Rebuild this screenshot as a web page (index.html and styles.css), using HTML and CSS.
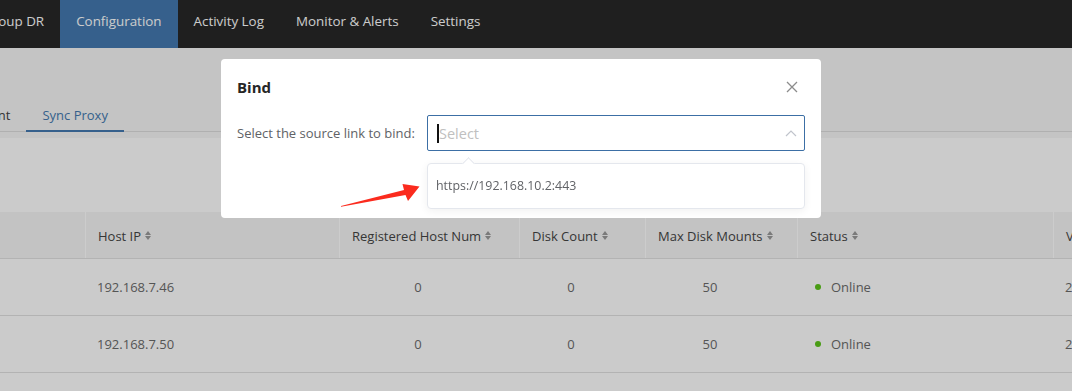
FILE: index.html
```html
<!DOCTYPE html>
<html lang="en">
<head>
    <meta charset="UTF-8">
    <meta name="viewport" content="width=device-width, initial-scale=1.0">
    <title>Sync Proxy</title>
    <link rel="stylesheet" href="styles.css">
</head>
<body>
    <header class="topbar">
        <nav class="menu">
            <a class="menu-item">Group DR</a>
            <a class="menu-item active">Configuration</a>
            <a class="menu-item">Activity Log</a>
            <a class="menu-item">Monitor &amp; Alerts</a>
            <a class="menu-item">Settings</a>
        </nav>
    </header>

    <main class="page">
        <div class="tabs">
            <div class="tab">Management</div>
            <div class="tab active">Sync Proxy</div>
        </div>

        <section class="card">
            <div class="table">
                <div class="row head">
                    <div class="cell"></div>
                    <div class="cell">Host IP <i class="sort"></i></div>
                    <div class="cell">Registered Host Num <i class="sort"></i></div>
                    <div class="cell">Disk Count <i class="sort"></i></div>
                    <div class="cell">Max Disk Mounts <i class="sort"></i></div>
                    <div class="cell">Status <i class="sort"></i></div>
                    <div class="cell">Version</div>
                </div>
                <div class="row">
                    <div class="cell"></div>
                    <div class="cell">192.168.7.46</div>
                    <div class="cell num">0</div>
                    <div class="cell num">0</div>
                    <div class="cell num">50</div>
                    <div class="cell status"><span class="dot"></span>Online</div>
                    <div class="cell">2.1.0</div>
                </div>
                <div class="row">
                    <div class="cell"></div>
                    <div class="cell">192.168.7.50</div>
                    <div class="cell num">0</div>
                    <div class="cell num">0</div>
                    <div class="cell num">50</div>
                    <div class="cell status"><span class="dot"></span>Online</div>
                    <div class="cell">2.1.0</div>
                </div>
            </div>
        </section>
    </main>

    <!-- 弹窗遮罩 -->
    <div class="mask"></div>

    <div class="dialog">
        <div class="dialog-header">
            <span class="dialog-title">Bind</span>
            <button class="dialog-close" type="button">
                <svg width="12" height="12" viewBox="0 0 12 12"><path d="M1 1L11 11M11 1L1 11" stroke="#8c8c8c" stroke-width="1.3" fill="none"/></svg>
            </button>
        </div>
        <div class="dialog-body">
            <div class="form-item">
                <label class="form-label">Select the source link to bind:</label>
                <div class="select">
                    <div class="select-input">
                        <span class="caret"></span>
                        <span class="placeholder">Select</span>
                        <svg class="chevron" width="12" height="7" viewBox="0 0 12 7"><path d="M1 6L6 1L11 6" stroke="#c0c4cc" stroke-width="1.2" fill="none"/></svg>
                    </div>
                    <div class="select-dropdown">
                        <div class="option">https://192.168.10.2:443</div>
                    </div>
                </div>
            </div>
        </div>
    </div>

    <!-- 标注箭头 -->
    <svg class="annotation" width="1072" height="391" viewBox="0 0 1072 391">
        <polygon points="341,206 404,190 402.5,184 419.5,186.5 408,201 405.5,195 341,206.8" fill="#fb2b1e"/>
    </svg>
</body>
</html>
```

FILE: styles.css
```css
body {
    margin: 0;
    width: 1072px;
    height: 391px;
    overflow: hidden;
    background: #f5f5f5;
    font-family: "Open Sans", "Noto Sans", sans-serif;
    font-size: 13px;
    color: #404040;
}
.topbar {
    height: 48px;
    background-color: #272727;
}
.menu {
    display: flex;
    height: 48px;
    margin-left: -33px;
}
.menu-item {
    padding: 0 16px 6px;
    line-height: 42px;
    font-size: 13.4px;
    color: #fff;
    white-space: nowrap;
}
.menu-item.active {
    background-color: #4479af;
}
.page {
    height: 343px;
    overflow: hidden;
}
.tabs {
    display: flex;
    margin-top: 52px;
    margin-left: -86px;
    border-bottom: 1px solid #dcdcdc;
}
.tab {
    padding: 0 16px;
    line-height: 30px;
    border-bottom: 2px solid transparent;
    margin-bottom: -1px;
    white-space: nowrap;
}
.tab.active {
    color: #4479af;
    border-bottom-color: #4479af;
}
.card {
    margin-top: 6px;
    padding-top: 74px;
    height: 179px;
    overflow: hidden;
    background-color: #fefefe;
}
.table {
    width: 1253px;
}
.row {
    display: grid;
    grid-template-columns: 85px 254px 180px 126px 152px 256px 200px;
    height: 56px;
    border-bottom: 1px solid #e0e0e0;
    color: #6b6b6b;
}
.row.head {
    height: 46px;
    background-color: #f4f4f4;
    color: #444;
}
.cell {
    display: flex;
    align-items: center;
    padding: 0 12px;
    white-space: nowrap;
    overflow: hidden;
}
.head .cell {
    padding-top: 1px;
}
.head .cell + .cell {
    border-left: 1px solid #fff;
}
.cell.num {
    justify-content: center;
    padding: 0 22px 0 0;
}
.cell.status {
    padding-left: 18px;
}
.dot {
    width: 6px;
    height: 6px;
    border-radius: 50%;
    background-color: #5cc41a;
    margin-right: 10px;
}
.sort {
    display: inline-flex;
    flex-direction: column;
    gap: 1px;
    margin-left: 4px;
}
.sort::before,
.sort::after {
    content: "";
    border-left: 3.5px solid transparent;
    border-right: 3.5px solid transparent;
}
.sort::before {
    border-bottom: 4px solid #999;
}
.sort::after {
    border-top: 4px solid #999;
}
.mask {
    position: fixed;
    inset: 0;
    background: rgba(0, 0, 0, 0.2);
}
.dialog {
    position: fixed;
    left: 221px;
    top: 59px;
    width: 568px;
    padding: 16px;
    background-color: #fff;
    border-radius: 4px;
}
.dialog-header {
    display: flex;
    justify-content: space-between;
    align-items: center;
    height: 24px;
}
.dialog-title {
    font-size: 15px;
    font-weight: 700;
    color: #262626;
}
.dialog-close {
    width: 24px;
    height: 24px;
    margin-right: 1px;
    padding: 0;
    border: none;
    background: none;
    display: flex;
    align-items: center;
    justify-content: center;
}
.dialog-body {
    margin-top: 16px;
    padding-bottom: 51px;
}
.form-item {
    display: flex;
    align-items: center;
}
.form-label {
    width: 190px;
    color: #606266;
    white-space: nowrap;
}
.select {
    flex: 1;
    position: relative;
}
.select-input {
    display: flex;
    align-items: center;
    height: 34px;
    border: 1px solid #3c6fa5;
    border-radius: 2px;
    padding: 0 7px 0 9px;
}
.caret {
    width: 2px;
    height: 19px;
    background-color: #111;
}
.placeholder {
    flex: 1;
    font-size: 14.5px;
    color: #c0c0c0;
}
.select-dropdown {
    position: absolute;
    top: calc(100% + 12px);
    left: 0;
    right: 0;
    padding: 6px 0;
    border: 1px solid #e4e7ed;
    border-radius: 4px;
    background-color: #fff;
    box-shadow: 0 2px 8px rgba(0, 0, 0, 0.06);
}
.select-dropdown::before {
    content: "";
    position: absolute;
    top: -5px;
    left: 36px;
    width: 8px;
    height: 8px;
    background-color: #fff;
    border-top: 1px solid #e4e7ed;
    border-left: 1px solid #e4e7ed;
    transform: rotate(45deg);
}
.option {
    padding: 0 8px;
    line-height: 32px;
    font-size: 12.4px;
    color: #606266;
}
.annotation {
    position: fixed;
    left: 0;
    top: 0;
    pointer-events: none;
}
```
